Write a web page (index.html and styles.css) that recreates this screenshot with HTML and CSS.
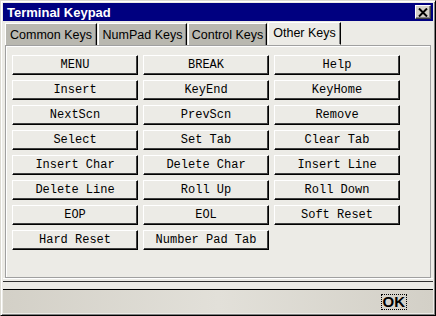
FILE: index.html
```html
<!DOCTYPE html>
<html lang="en">
<head>
    <meta charset="UTF-8">
    <title>Terminal Keypad</title>
    <link rel="stylesheet" href="styles.css">
</head>
<body>
    <div class="window">
        <div class="titlebar">
            <span class="title">Terminal Keypad</span>
            <button class="close">
                <svg width="10" height="9" viewBox="0 0 10 9"><path d="M1 0.5 L9 8.5 M9 0.5 L1 8.5" stroke="#000" stroke-width="2"/></svg>
            </button>
        </div>

        <div class="tabs">
            <div class="tab common">Common Keys</div>
            <div class="tab numpad">NumPad Keys</div>
            <div class="tab control">Control Keys</div>
            <div class="tab other active">Other Keys</div>
        </div>

        <div class="panel">
            <div class="keys">
                <button class="key">MENU</button>
                <button class="key">BREAK</button>
                <button class="key">Help</button>
                <button class="key">Insert</button>
                <button class="key">KeyEnd</button>
                <button class="key">KeyHome</button>
                <button class="key">NextScn</button>
                <button class="key">PrevScn</button>
                <button class="key">Remove</button>
                <button class="key">Select</button>
                <button class="key">Set Tab</button>
                <button class="key">Clear Tab</button>
                <button class="key">Insert Char</button>
                <button class="key">Delete Char</button>
                <button class="key">Insert Line</button>
                <button class="key">Delete Line</button>
                <button class="key">Roll Up</button>
                <button class="key">Roll Down</button>
                <button class="key">EOP</button>
                <button class="key">EOL</button>
                <button class="key">Soft Reset</button>
                <button class="key">Hard Reset</button>
                <button class="key">Number Pad Tab</button>
            </div>
        </div>

        <div class="spacer"></div>

        <div class="footer">
            <button class="ok"><span>OK</span></button>
        </div>
    </div>
</body>
</html>
```

FILE: styles.css
```css
body {
    margin: 0;
    background-color: #ecebe6;
    font-family: "Liberation Sans", Arial, sans-serif;
}

.window {
    box-sizing: border-box;
    width: 436px;
    height: 316px;
    padding: 2px;
    background-color: #ecebe6;
    border-top: 1px solid #dcdad2;
    border-left: 1px solid #dcdad2;
    border-right: 1px solid #000;
    border-bottom: 1px solid #000;
    box-shadow: inset 1px 1px #fff, inset -1px -1px #808080;
    display: flex;
    flex-direction: column;
}

.titlebar {
    height: 18px;
    background-color: #000080;
    display: flex;
    align-items: center;
    justify-content: space-between;
    padding: 0 2px 0 4px;
}

.title {
    color: #fff;
    font-weight: bold;
    font-size: 13px;
}

.close {
    box-sizing: border-box;
    width: 16px;
    height: 14px;
    padding: 0;
    background-color: #d4d0c8;
    border-top: 1px solid #fff;
    border-left: 1px solid #fff;
    border-right: 1px solid #404040;
    border-bottom: 1px solid #404040;
    box-shadow: inset -1px -1px #808080;
    display: flex;
    align-items: center;
    justify-content: center;
}

.tabs {
    display: flex;
    margin-top: 2px;
    padding-left: 2px;
    height: 22px;
    position: relative;
    z-index: 1;
}

.tab {
    box-sizing: border-box;
    height: 22px;
    padding-top: 4px;
    text-align: center;
    font-size: 12.5px;
    color: #000;
    background-color: #b9b8b0;
    border-top: 1px solid #fff;
    border-left: 1px solid #fff;
    border-right: 1px solid #000;
    box-shadow: inset -1px 0 #808080;
    margin-right: 1px;
}

.common { width: 92px; }
.numpad { width: 89px; }
.control { width: 79px; }
.other { width: 73px; }

.tab.active {
    height: 23px;
    margin-top: -1px;
    padding-top: 3px;
    background-color: #ecebe6;
    border-bottom: 1px solid #ecebe6;
}

.panel {
    box-sizing: border-box;
    margin: 0 2px;
    height: 233px;
    border: 1px solid #a0a0a0;
    box-shadow: inset 1px 1px #fff;
    padding: 9px 6px;
}

.keys {
    display: grid;
    grid-template-columns: repeat(3, 126px);
    grid-auto-rows: 20px;
    column-gap: 5px;
    row-gap: 5px;
}

.key {
    box-sizing: border-box;
    padding: 0;
    font-family: "Liberation Mono", "Courier New", monospace;
    font-size: 12px;
    color: #000;
    background-color: #ecebe6;
    border-top: 1px solid #fff;
    border-left: 1px solid #fff;
    border-right: 1px solid #000;
    border-bottom: 1px solid #000;
    box-shadow: inset -1px -1px #404040;
}

.spacer {
    height: 12px;
    border-top: 1px solid #fff;
    box-sizing: border-box;
}

.spacer::before {
    content: "";
    display: block;
    margin-top: 2px;
    border-top: 1px solid #303030;
}

.spacer::after {
    content: "";
    display: block;
    margin-top: 7px;
    border-top: 1px solid #000;
}

.footer {
    flex: 1;
    display: flex;
    align-items: center;
    justify-content: flex-end;
    padding-right: 26px;
    background: linear-gradient(90deg, #d3d0c7, #e2e0d9 50%, #d3d0c7);
}

.ok {
    padding: 0 1px;
    border: 1px dotted #000;
    background: transparent;
    font-family: "Liberation Sans", Arial, sans-serif;
    font-weight: bold;
    font-size: 15px;
    line-height: 13px;
    height: 16px;
}
```
